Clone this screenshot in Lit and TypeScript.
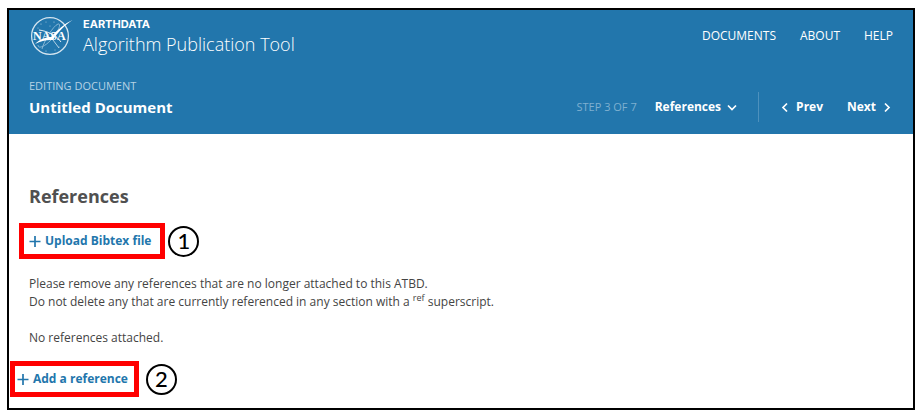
import { LitElement, html, css, svg } from "lit";
import { customElement, property } from "lit/decorators.js";

@customElement("nasa-logo")
class NasaLogo extends LitElement {
  static styles = css`
    :host { display: block; width: 44px; height: 40px; }
    svg { display: block; }
    .word { font: bold 12px "Liberation Serif", serif; fill: #fff; }
  `;
  render() {
    return html`<svg width="44" height="40" viewBox="0 0 44 40" role="img" aria-label="NASA">
      <circle cx="21" cy="20" r="18.4" fill="none" stroke="#d3e4ef" stroke-width="1.3" />
      <path d="M13 33 C15 25 24 10 29 8 C33 7 29 17 21 25 C15 31 9 33 9 29" fill="none" stroke="#8fbbd8" stroke-width="0.9" />
      <g fill="#b5d2e4">
        <circle cx="12" cy="8" r="0.6" /><circle cx="17" cy="6" r="0.5" /><circle cx="25" cy="6" r="0.6" />
        <circle cx="9" cy="12" r="0.5" /><circle cx="17" cy="35" r="0.6" /><circle cx="30" cy="31" r="0.6" />
        <circle cx="21" cy="10" r="0.5" /><circle cx="26" cy="34" r="0.5" />
      </g>
      <text class="word" x="4" y="24">NASA</text>
      <path d="M43.500 4 C35 8 28 14 22 21 C17 21 11 23 6 28 C12 25 18 23.500 24 24 C29 16 35 10 43.500 4Z" fill="#fff" />
      <path d="M10 14 C18 15 27 19 32 26" fill="none" stroke="#e3eef5" stroke-width="1" />
      <path d="M24 24 L30 32" fill="none" stroke="#b5d2e4" stroke-width="1" />
    </svg>`;
  }
}

const shapes = {
  plus: svg`<path d="M6 1V12M0.5 6.5H11.5" />`,
  down: svg`<path d="M2 4.5L6 8.5L10 4.5" />`,
  left: svg`<path d="M8 2.5L4 6.5L8 10.5" />`,
  right: svg`<path d="M4 2.5L8 6.5L4 10.5" />`,
};

@customElement("line-icon")
class LineIcon extends LitElement {
  @property() name: keyof typeof shapes = "plus";
  static styles = css`
    :host { display: block; width: 12px; height: 13px; }
    svg { display: block; fill: none; stroke: currentColor; stroke-width: 1.7; }
  `;
  render() {
    return html`<svg width="12" height="13" viewBox="0 0 12 13" aria-hidden="true">${shapes[this.name]}</svg>`;
  }
}

@customElement("app-root")
class AppRoot extends LitElement {
  static styles = css`
    :host {
      display: block;
      padding: 8px 8px 8px 7px;
      font: 12px/18px "Open Sans", "Noto Sans", sans-serif;
      color: #444;
      background: #fff;
    }
    * { box-sizing: border-box; }
    h1, h2, p { margin: 0; }
    a { color: inherit; text-decoration: none; }
    button {
      display: flex;
      align-items: center;
      padding: 0;
      border: 0;
      background: none;
      color: inherit;
      font: inherit;
      font-weight: 700;
      cursor: pointer;
    }
    .frame { border: 2px solid #000; }
    header {
      display: flex;
      flex-direction: column;
      gap: 20px;
      padding: 6px 20px 12px;
      background: #2276ac;
      color: #fff;
    }
    .row { display: flex; align-items: center; justify-content: space-between; }
    .document { align-items: flex-end; }
    .title { padding-bottom: 4px; }
    .brand { display: flex; align-items: center; gap: 10px; }
    .org { font: 700 11px/16px Inter, "Open Sans", sans-serif; }
    .tool { font-size: 18px; line-height: 24px; font-weight: 300; }
    nav { display: flex; gap: 24px; }
    .eyebrow { font-size: 11px; line-height: 20px; color: #b5d2e4; }
    h1 { font-size: 15px; line-height: 22px; font-weight: 700; }
    .steps { display: flex; align-items: center; }
    .step { margin-right: 18px; font-size: 11px; color: #7fb0d0; }
    .picker, .pager button { gap: 5px; }
    .divider { width: 1px; height: 30px; margin: 0 20px; background: #4d91bd; }
    .pager { display: flex; gap: 24px; }
    main { padding: 50px 20px 11px 1px; }
    h2 { padding-left: 19px; font-size: 18px; line-height: 24px; color: #505050; }
    .text { padding-left: 19px; }
    .text p + p { margin-top: 18px; }
    sup { font-size: 9px; line-height: 0; }
    .callout { display: flex; align-items: center; }
    .upload { gap: 3px; margin: 15px 0 16px 9px; }
    .add { gap: 7px; margin-top: 14px; }
    .box {
      height: 36px;
      padding: 0 9px 0 5px;
      border: 5px solid #f00;
      color: #2276ac;
      gap: 4px;
    }
    .add .box { padding: 0 6px 0 2px; }
    .badge {
      display: grid;
      place-items: center;
      width: 31px;
      height: 31px;
      border: 2px solid #000;
      border-radius: 50%;
      color: #000;
      font: 500 22px/26px Lato, sans-serif;
    }
  `;
  render() {
    return html`<div class="frame">
      <header>
        <div class="row">
          <div class="brand">
            <nasa-logo></nasa-logo>
            <div>
              <div class="org">EARTHDATA</div>
              <div class="tool">Algorithm Publication Tool</div>
            </div>
          </div>
          <nav><a href="#documents">DOCUMENTS</a><a href="#about">ABOUT</a><a href="#help">HELP</a></nav>
        </div>
        <div class="row document">
          <div class="title">
            <div class="eyebrow">EDITING DOCUMENT</div>
            <h1>Untitled Document</h1>
          </div>
          <div class="steps">
            <span class="step">STEP 3 OF 7</span>
            <button class="picker" aria-haspopup="true">References<line-icon name="down"></line-icon></button>
            <span class="divider"></span>
            <div class="pager">
              <button><line-icon name="left"></line-icon>Prev</button>
              <button>Next<line-icon name="right"></line-icon></button>
            </div>
          </div>
        </div>
      </header>
      <main>
        <h2>References</h2>
        <div class="callout upload">
          <button class="box"><line-icon></line-icon>Upload Bibtex file</button>
          <span class="badge">1</span>
        </div>
        <div class="text">
          <p>Please remove any references that are no longer attached to this ATBD.<br />Do not delete any that are currently referenced in any section with a <sup>ref</sup> superscript.</p>
          <p>No references attached.</p>
        </div>
        <div class="callout add">
          <button class="box"><line-icon></line-icon>Add a reference</button>
          <span class="badge">2</span>
        </div>
      </main>
    </div>`;
  }
}
